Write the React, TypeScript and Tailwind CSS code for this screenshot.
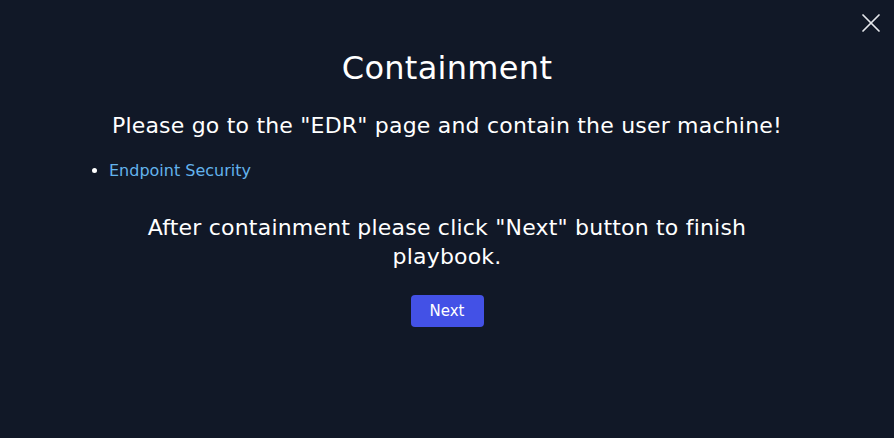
import { X } from "lucide-react";

export default function App() {
  return (
    <div
      className="relative w-[894px] h-[438px] bg-[#111827] text-white overflow-hidden"
      style={{ fontFamily: "'DejaVu Sans', 'Liberation Sans', sans-serif" }}
    >
      <button className="absolute top-[7px] right-[7px] text-[#e5e7eb]">
        <X size={32} strokeWidth={1.3} />
      </button>

      <div className="flex flex-col pt-[48px]">
        <h1 className="text-center text-[32px] leading-[40px] font-medium tracking-[0.3px]">
          Containment
        </h1>
        <p className="mt-[23px] text-center text-[22px] leading-[30px] tracking-[0.2px]">
          Please go to the "EDR" page and contain the user machine!
        </p>
        <ul className="mt-[19px] pl-[109px] list-disc text-[16px] leading-[22px]">
          <li>
            <a className="text-[#63b3ed]" href="#">
              Endpoint Security
            </a>
          </li>
        </ul>
        <p className="mt-[31px] mx-auto max-w-[660px] text-center text-[22px] leading-[29px] tracking-[0.2px]">
          After containment please click "Next" button to finish playbook.
        </p>
        <div className="mt-[24px] flex justify-center">
          <button className="w-[73px] h-[32px] rounded-[4px] bg-[#4351e6] text-[15px] font-medium text-white">
            Next
          </button>
        </div>
      </div>
    </div>
  );
}
